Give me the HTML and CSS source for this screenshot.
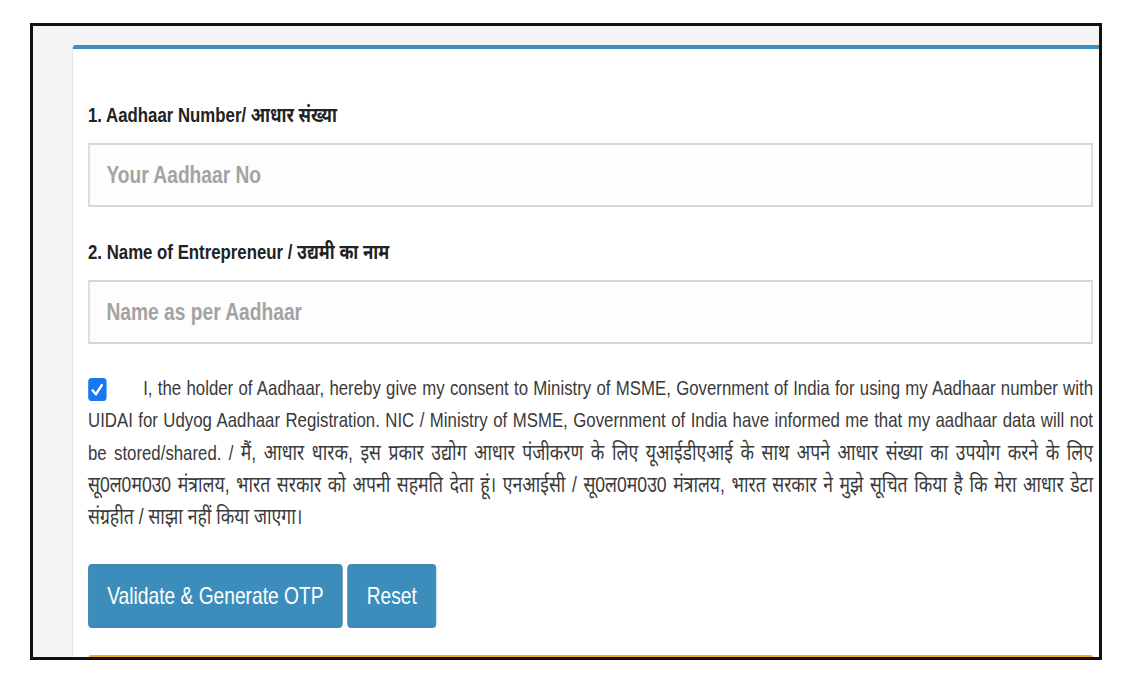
FILE: index.html
```html
<!DOCTYPE html>
<html lang="en">
<head>
  <meta charset="UTF-8">
  <meta name="viewport" content="width=device-width, initial-scale=1.0">
  <title>Udyog Aadhaar Registration</title>
  <link rel="stylesheet" href="styles.css">
</head>
<body>
  <div class="frame">
    <section class="box box-primary">
      <div class="box-body">
        <div class="form-group">
          <label class="field-label" for="aadhaar-no">1. Aadhaar Number/ आधार संख्या</label>
          <input type="text" id="aadhaar-no" class="form-control" placeholder="Your Aadhaar No">
        </div>

        <div class="form-group">
          <label class="field-label" for="owner-name">2. Name of Entrepreneur / उद्यमी का नाम</label>
          <input type="text" id="owner-name" class="form-control" placeholder="Name as per Aadhaar">
        </div>

        <!-- Consent, broken the way the form shows it -->
        <p class="consent">
          <span class="line"><span class="check"><svg viewBox="0 0 23 23" width="23" height="23"><path d="M5.5 12.5 L9.8 16.2 L17 7.2" fill="none" stroke="#fff" stroke-width="2.8" stroke-linecap="round" stroke-linejoin="round"/></svg></span>I, the holder of Aadhaar, hereby give my consent to Ministry of MSME, Government of India for using my Aadhaar number with</span>
          <span class="line">UIDAI for Udyog Aadhaar Registration. NIC / Ministry of MSME, Government of India have informed me that my aadhaar data will not</span>
          <span class="line">be stored/shared. / <span lang="hi">मैं, आधार धारक, इस प्रकार उद्योग आधार पंजीकरण के लिए यूआईडीएआई के साथ अपने आधार संख्या का उपयोग करने के लिए</span></span>
          <span class="line" lang="hi">सू0ल0म0उ0 मंत्रालय, भारत सरकार को अपनी सहमति देता हूं। एनआईसी / सू0ल0म0उ0 मंत्रालय, भारत सरकार ने मुझे सूचित किया है कि मेरा आधार डेटा</span>
          <span class="line" lang="hi">संग्रहीत / साझा नहीं किया जाएगा।</span>
        </p>

        <div class="actions">
          <button class="btn">Validate &amp; Generate OTP</button>
          <button class="btn">Reset</button>
        </div>

        <div class="box box-warning"></div>
      </div>
    </section>
  </div>
</body>
</html>
```

FILE: styles.css
```css
body {
  margin: 0;
  padding: 23px 0 0 30px;
  background: #fff;
  font-family: "Liberation Sans", "Noto Sans Devanagari", Arial, sans-serif;
  color: #333;
}

.frame {
  box-sizing: border-box;
  width: 1072px;
  height: 637px;
  border: 3px solid #111;
  background: #f4f4f4;
  padding: 19px 0 0 40px;
  overflow: hidden;
}

.box {
  background: #fff;
  border-top: 4px solid #3c8dbc;
  border-radius: 3px 0 0 0;
  box-shadow: -1px 0 1px rgba(0, 0, 0, 0.07);
}

/* the capture is squeezed sideways, so the body is laid out wider and narrowed */
.box-body {
  box-sizing: border-box;
  width: 125%;
  padding: 52px 7.5px 0 18.75px;
  transform: scaleX(0.8);
  transform-origin: 0 0;
}

.form-group {
  margin-bottom: 31px;
}

.field-label {
  display: block;
  font-size: 21px;
  line-height: 28px;
  font-weight: bold;
  color: #222;
  margin-bottom: 14px;
}

.form-control {
  box-sizing: border-box;
  display: block;
  width: 100%;
  height: 64px;
  padding: 0 21px;
  border: 2px solid #d6d6d6;
  background: #fdfdfd;
  font-family: inherit;
  font-size: 24px;
  font-weight: bold;
  color: #555;
  outline: none;
}

.form-control::placeholder {
  color: #a3a3a3;
}

.consent {
  margin: -3px 0 0;
  font-size: 21px;
  line-height: 32.3px;
  color: #3a3a3a;
}

.consent .line {
  display: block;
  text-align: justify;
  text-align-last: justify;
}

.consent .line:last-child {
  text-align-last: left;
}

.consent :lang(hi) {
  font-size: 22px;
}

.check {
  display: inline-block;
  width: 23px;
  height: 23px;
  margin-right: 46px;
  vertical-align: -6px;
  background: #1877f2;
  border-radius: 4px;
}

.check svg {
  display: block;
}

.actions {
  display: flex;
  gap: 6px;
  margin-top: 31px;
}

.btn {
  height: 64px;
  padding: 0 23px;
  background: #3c8dbc;
  border: 1px solid #367fa9;
  border-radius: 4px;
  color: #fff;
  font-family: inherit;
  font-size: 24px;
  cursor: pointer;
}

.btn:hover {
  background: #367fa9;
}

.box-warning {
  margin-top: 27px;
  height: 40px;
  border-top: 2px solid #f7a629;
  border-radius: 3px;
  box-shadow: none;
}
```
